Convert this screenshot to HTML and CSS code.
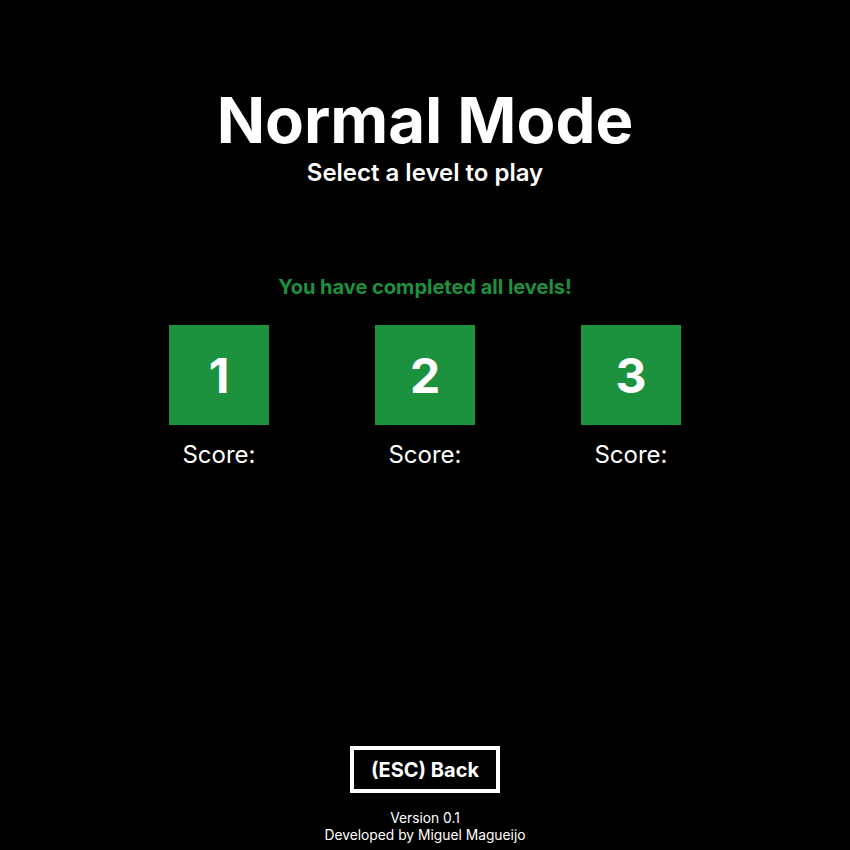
FILE: index.html
```html
<!DOCTYPE html>
<html>
<head>
<meta charset="utf-8">
<link rel="stylesheet" href="styles.css">
</head>
<body>
<div class="page">
  <header class="head">
    <h1 class="title">Normal Mode</h1>
    <p class="subtitle">Select a level to play</p>
  </header>
  <main class="levels-area">
    <p class="done">You have completed all levels!</p>
    <div class="levels">
      <div class="level"><div class="tile">1</div><div class="score">Score:</div></div>
      <div class="level"><div class="tile">2</div><div class="score">Score:</div></div>
      <div class="level"><div class="tile">3</div><div class="score">Score:</div></div>
    </div>
  </main>
  <footer class="foot">
    <div class="back">(ESC) Back</div>
    <div class="info">
      <div>Version 0.1</div>
      <div>Developed by Miguel Magueijo</div>
    </div>
  </footer>
</div>
</body>
</html>
```
FILE: styles.css
```css
html, body {
  margin: 0;
  padding: 0;
  background: #000;
  color: #fff;
  font-family: Inter, "Noto Sans", sans-serif;
}
.page {
  height: 850px;
  display: flex;
  flex-direction: column;
  align-items: center;
}
.head {
  padding-top: 81px;
  text-align: center;
}
.title {
  margin: 0;
  font-size: 63.5px;
  line-height: 78px;
  font-weight: 700;
}
.subtitle {
  margin: -1px 0 0;
  font-size: 24px;
  line-height: 29px;
  font-weight: 600;
}
.levels-area {
  margin-top: 88px;
  display: flex;
  flex-direction: column;
  align-items: center;
}
.done {
  margin: 0;
  font-size: 20px;
  line-height: 24px;
  font-weight: 700;
  color: #1c923e;
}
.levels {
  margin-top: 26px;
  display: flex;
  gap: 106px;
}
.level {
  display: flex;
  flex-direction: column;
  align-items: center;
}
.tile {
  width: 100px;
  height: 100px;
  background: #1c923e;
  display: flex;
  align-items: center;
  justify-content: center;
  font-size: 48px;
  font-weight: 700;
}
.score {
  margin-top: 15px;
  font-size: 24px;
  line-height: 29px;
}
.foot {
  margin-top: auto;
  display: flex;
  flex-direction: column;
  align-items: center;
  padding-bottom: 6px;
}
.back {
  width: 150px;
  height: 47px;
  box-sizing: border-box;
  border: 4px solid #fff;
  display: flex;
  align-items: center;
  justify-content: center;
  font-size: 20px;
  font-weight: 700;
}
.info {
  margin-top: 17px;
  text-align: center;
  font-size: 13.8px;
  line-height: 17px;
}
```
